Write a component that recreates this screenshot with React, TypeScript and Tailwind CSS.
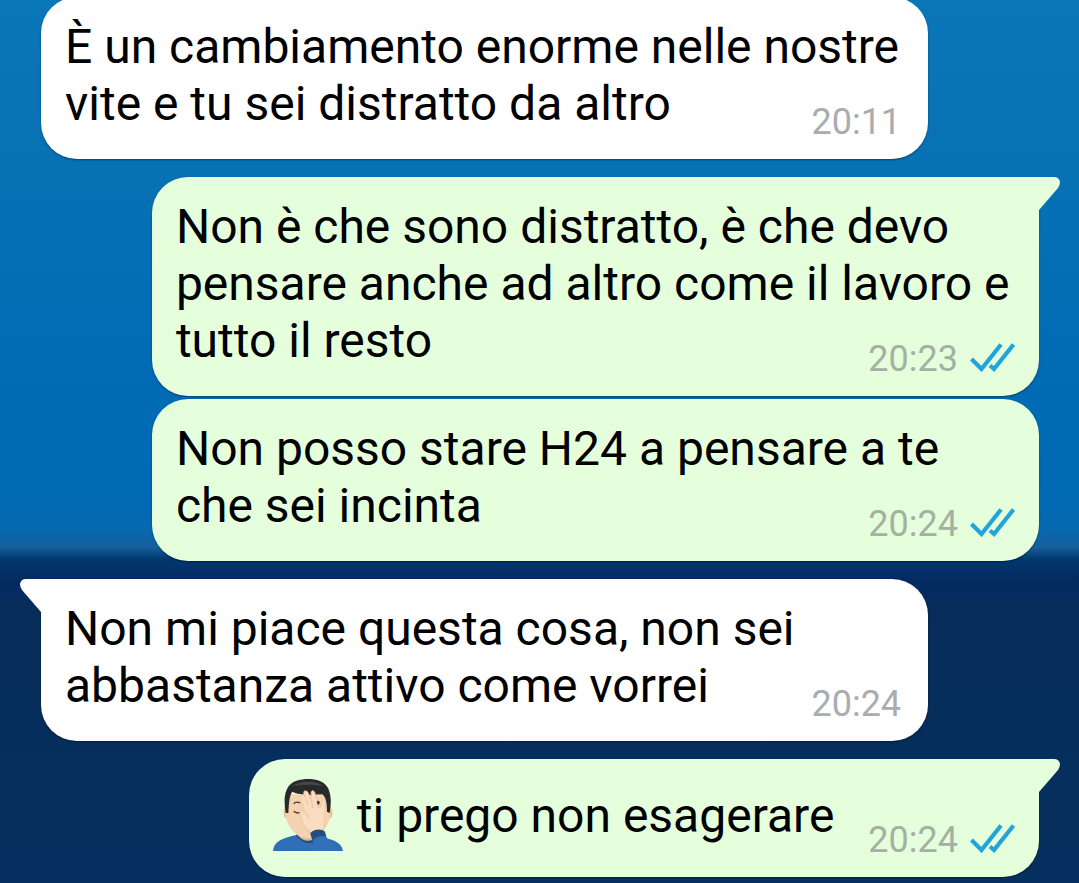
import { clsx } from "clsx";
import type { ReactNode } from "react";

type Message = {
  id: number;
  mine: boolean;
  tail?: boolean;
  short?: boolean;
  body: ReactNode;
  time: string;
};

const messages: Message[] = [
  {
    id: 1,
    mine: false,
    body: "È un cambiamento enorme nelle nostre vite e tu sei distratto da altro",
    time: "20:11",
  },
  {
    id: 2,
    mine: true,
    tail: true,
    body: "Non è che sono distratto, è che devo pensare anche ad altro come il lavoro e tutto il resto",
    time: "20:23",
  },
  {
    id: 3,
    mine: true,
    body: "Non posso stare H24 a pensare a te che sei incinta",
    time: "20:24",
  },
  {
    id: 4,
    mine: false,
    tail: true,
    body: "Non mi piace questa cosa, non sei abbastanza attivo come vorrei",
    time: "20:24",
  },
  {
    id: 5,
    mine: true,
    tail: true,
    short: true,
    body: (
      <>
        <Facepalm />
        <span>ti prego non esagerare</span>
      </>
    ),
    time: "20:24",
  },
];

export default function App() {
  return (
    <main className="min-h-screen overflow-hidden bg-[linear-gradient(#0a77b8_0%,#0671b3_20%,#006bb5_45%,#0069b4_57%,#0868ae_60%,#155f9b_62%,#00386e_63.3%,#042b62_65.5%,#062d5a_69%,#06305f_100%)] pr-10 pl-[41px] font-['Roboto',sans-serif]">
      <ol className="-mt-[3px] flex flex-col pb-1.5">
        {messages.map((message, i) => (
          <li
            key={message.id}
            className={clsx(
              "flex",
              message.mine && "justify-end",
              i > 0 && (message.tail ? "mt-[18px]" : "mt-[3px]"),
            )}
          >
            <Bubble message={message} />
          </li>
        ))}
      </ol>
    </main>
  );
}

function Bubble({ message }: { message: Message }) {
  const { mine, tail, short, body, time } = message;
  return (
    <article
      className={clsx(
        "relative grid rounded-[36px] pt-[21px] pb-[27px] pl-6 shadow-[0_1px_2px_rgba(0,0,0,0.4)]",
        mine ? "bg-[#e5ffdc] pr-6" : "bg-white pr-[27px]",
        tail && (mine ? "rounded-tr-none" : "rounded-tl-none"),
        short ? "grid-cols-[auto_auto] gap-[34px]" : "w-8/9",
      )}
    >
      {tail && <Tail mine={mine} />}
      <div
        className={clsx(
          "text-[48px] leading-[57px] text-black",
          short ? "flex items-center gap-3.5" : "col-start-1 row-start-1",
        )}
      >
        {body}
      </div>
      <footer
        className={clsx(
          "-mb-2 flex items-center gap-3 self-end justify-self-end text-4xl leading-9",
          mine ? "text-[#a3b1a2]" : "text-[#a9adb0]",
          !short && "col-start-1 row-start-1",
        )}
      >
        <time>{time}</time>
        {mine && <ReadTicks />}
      </footer>
    </article>
  );
}

function Tail({ mine }: { mine: boolean }) {
  return (
    <svg
      viewBox="0 0 21 33"
      className={clsx(
        "absolute top-0 h-[33px] w-[21px]",
        mine ? "left-full text-[#e5ffdc]" : "right-full -scale-x-100 text-white",
      )}
      aria-hidden="true"
    >
      <path d="M0 0H15Q20 0 21 5Q21 8 19 11L0 33Z" fill="currentColor" />
    </svg>
  );
}

function ReadTicks() {
  return (
    <svg
      viewBox="0 0 45 29"
      className="mb-1 h-[29px] w-[45px]"
      fill="none"
      stroke="#1fa5dc"
      strokeWidth="4.2"
      role="img"
      aria-label="Letto"
    >
      <path d="M1.5 16L11.5 26L31 1.5" />
      <path d="M20 22.5L24 26L43.5 1.5" />
    </svg>
  );
}

function Facepalm() {
  return (
    <svg
      viewBox="0 0 210 216"
      className="-my-px h-[72px] w-[70px] shrink-0"
      role="img"
      aria-label="Uomo con la mano sul viso"
    >
      {/* shirt */}
      <path
        d="M0 216C2 190 22 178 70 168C90 192 116 192 130 172C180 180 206 190 210 216Z"
        fill="#2f6fb8"
      />
      <path
        d="M68 168C84 192 110 196 124 190L126 182C108 184 88 182 76 164Z"
        fill="#234f7c"
      />
      {/* neck, ears and face */}
      <path d="M76 140H130V176C112 190 90 188 76 170Z" fill="#e2b48f" />
      <ellipse cx="39" cy="102" rx="7" ry="15" fill="#e9bd98" />
      <ellipse cx="171" cy="102" rx="7" ry="15" fill="#e9bd98" />
      <path
        d="M38 46H172V108C168 142 140 178 105 178C72 178 42 146 38 108Z"
        fill="#f3d2b1"
      />
      {/* hair */}
      <path
        d="M38 102C32 66 32 28 60 10C86 -4 130 -4 152 12C176 30 176 68 170 102L162 98C162 70 158 54 148 46C114 48 76 48 58 38C48 52 48 74 46 102Z"
        fill="#29292b"
      />
      <path
        d="M56 22C82 4 130 4 152 22C126 16 86 16 56 22Z"
        fill="#48484a"
      />
      {/* eyes, brow and mouth */}
      <path
        d="M62 74Q70 66 82 72M62 97Q70 104 80 101"
        fill="none"
        stroke="#46332b"
        strokeWidth="4"
      />
      <ellipse cx="135" cy="71" rx="5" ry="6" fill="#3b2a25" />
      {/* hand over the face */}
      <path
        d="M116 166C96 148 86 126 82 104C78 92 84 92 90 98L96 104L84 56C82 46 92 44 96 54L106 80L92 42C92 32 102 34 106 42L118 76L114 40C116 32 124 34 126 42L133 78C136 90 140 90 144 82L148 66C152 58 158 62 156 72C156 106 154 134 150 164Z"
        fill="#fadcc1"
        stroke="#ecc19d"
        strokeWidth="2"
      />
      <path
        d="M112 162L102 150M100 102L108 118M117 78L119 88"
        stroke="#dcaa84"
        strokeWidth="2"
      />
      {/* sleeve */}
      <path
        d="M112 162C124 150 144 150 156 160C160 176 170 196 188 216H116C122 200 122 180 112 162Z"
        fill="#3071b9"
      />
      <path
        d="M112 164C122 150 144 148 156 158L158 172C144 168 128 174 118 184Z"
        fill="#244f7d"
      />
    </svg>
  );
}
